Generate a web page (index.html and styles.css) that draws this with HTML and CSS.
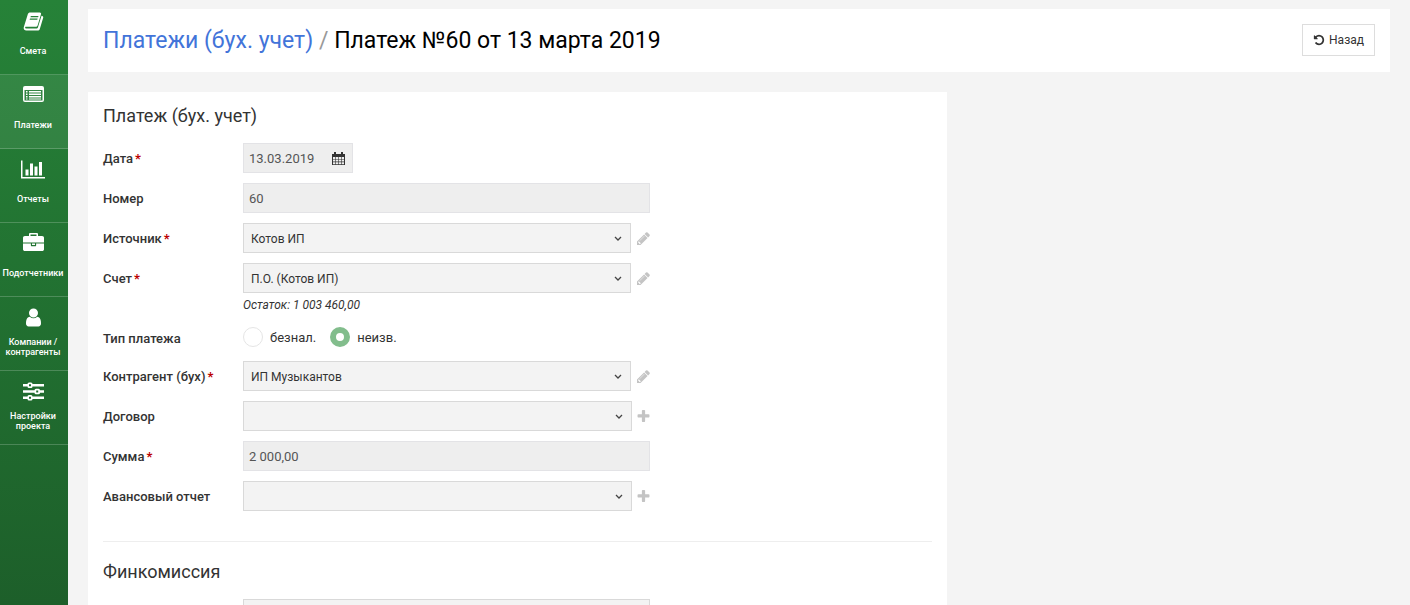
FILE: index.html
```html
<!DOCTYPE html>
<html lang="ru">
  <head>
    <meta charset="UTF-8" />
    <meta name="viewport" content="width=device-width, initial-scale=1" />
    <title>Платеж №60 от 13 марта 2019</title>
    <link rel="stylesheet" href="styles.css">
  </head>
  <body>
    <!-- shared icons -->
    <svg class="sprite" aria-hidden="true">
      <symbol id="pencil" viewBox="128 128 1536 1536">
        <path d="M491 1536l91-91-235-235-91 91v107h128v128h107zm523-928q0-22-22-22-10 0-17 7l-542 542q-7 7-7 17 0 22 22 22 10 0 17-7l542-542q7-7 7-17zm-54-192l416 416-832 832h-416v-416zm683 96q0 53-37 90l-166 166-416-416 166-165q36-38 90-38 53 0 91 38l235 234q37 39 37 91z" />
      </symbol>
      <symbol id="plus" viewBox="128 128 1536 1536">
        <path d="M1600 736v192q0 40-28 68t-68 28h-416v416q0 40-28 68t-68 28h-192q-40 0-68-28t-28-68v-416h-416q-40 0-68-28t-28-68v-192q0-40 28-68t68-28h416v-416q0-40 28-68t68-28h192q40 0 68 28t28 68v416h416q40 0 68 28t28 68z" />
      </symbol>
    </svg>

    <div class="app">
      <nav class="sidebar">
        <a href="#">
          <svg viewBox="0 0 21 21">
            <path fill-rule="evenodd" d="M7.2 1.5h9.6c1 0 1.5.8 1.2 1.7l-3.4 11.2c-.3.9-1.1 1.4-2 1.4H2.8c-.6 0-.9.7-.5 1.2.2.4.6.5 1.1.5h10.3c.5 0 .9-.3 1.1-.8l3.7-12c1.3.3 2 1 1.7 2.1l-3.4 11.1c-.3.9-1.2 1.6-2.2 1.6H3.300C1.700 19.500.4 18 .7 16.400L4.800 3.200c.4-1 1.200-1.700 2.400-1.700zM7.800 5l-.3 1.200h7.600l.4-1.200zM7 7.600l-.4 1.200h7.700l.3-1.200z" />
          </svg>
          <span>Смета</span>
        </a>
        <a href="#" class="active">
          <svg viewBox="0 0 21 21">
            <path fill-rule="evenodd" d="M2 1h17a2 2 0 0 1 2 2v12a2 2 0 0 1-2 2H2a2 2 0 0 1-2-2V3a2 2 0 0 1 2-2zM1.500 5v10.500h18V5zM3 6h1.500v1.500H3zm3 0h12v1.500H6zM3 8.500h1.500V10H3zm3 0h12V10H6zM3 11h1.500v1.500H3zm3 0h12v1.500H6zM3 13.500h1.500v1H3zm3 0h12v1H6z" />
          </svg>
          <span>Платежи</span>
        </a>
        <a href="#">
          <svg class="wide" viewBox="0 0 2048 1792">
            <path d="M640 896v512h-256v-512h256zm384-512v1024h-256v-1024h256zm1024 1152v128h-2048v-1536h128v1408h1920zm-640-896v768h-256v-768h256zm384-384v1152h-256v-1152h256z" />
          </svg>
          <span>Отчеты</span>
        </a>
        <a href="#">
          <svg viewBox="0 0 1792 1792">
            <path d="M640 256h512v-128h-512v128zm1152 640v480q0 66-47 113t-113 47h-1472q-66 0-113-47t-47-113v-480h672v160q0 26 19 45t45 19h320q26 0 45-19t19-45v-160h672zm-768 0v128h-256v-128h256zm768-480v384h-1792v-384q0-66 47-113t113-47h352v-160q0-40 28-68t68-28h576q40 0 68 28t28 68v160h352q66 0 113 47t47 113z" />
          </svg>
          <span>Подотчетники</span>
        </a>
        <a href="#">
          <svg viewBox="0 0 1792 1792">
            <path d="M1536 1399q0 109-62.500 187t-150.500 78h-854q-88 0-150.500-78t-62.500-187q0-85 8.500-160.500t31.500-152 58.500-131 94-89 134.500-34.500q131 128 313 128t313-128q76 0 134.500 34.500t94 89 58.500 131 31.500 152 8.500 160.500zm-256-887q0 159-112.500 271.500t-271.500 112.500-271.500-112.500-112.500-271.500 112.500-271.500 271.500-112.500 271.500 112.500 112.500 271.500z" />
          </svg>
          <span>Компании / контрагенты</span>
        </a>
        <a href="#">
          <svg viewBox="0 0 21 21">
            <path fill-rule="evenodd" d="M0 3h4.500v2.500H0zM9.500 3H21v2.500H9.500zM6 1.500h2a1.500 1.500 0 0 1 1.500 1.500v2.500A1.500 1.500 0 0 1 8 7H6a1.500 1.500 0 0 1-1.500-1.500V3A1.500 1.500 0 0 1 6 1.500zM6 3.200v2.100h2V3.200zM0 9.200h11.500v2.500H0zM17 9.200h4v2.500h-4zM13 7.700h2.500A1.500 1.500 0 0 1 17 9.200v2.500a1.500 1.500 0 0 1-1.500 1.500H13a1.500 1.500 0 0 1-1.500-1.500V9.200A1.500 1.500 0 0 1 13 7.700zM13.200 9.400v2.100h2V9.400zM0 15.500h4.500V18H0zM9.500 15.500H21V18H9.500zM6 14h2a1.500 1.500 0 0 1 1.500 1.500V18A1.500 1.500 0 0 1 8 19.500H6A1.500 1.500 0 0 1 4.500 18v-2.500A1.500 1.500 0 0 1 6 14zM6 15.700v2.100h2v-2.100z" />
          </svg>
          <span>Настройки проекта</span>
        </a>
      </nav>

      <main>
        <header>
          <h1><a href="#">Платежи (бух. учет)</a> <i>/</i> Платеж №60 от 13 марта 2019</h1>
          <button class="back" type="button">
            <svg viewBox="0 0 1792 1792">
              <path d="M1664 896q0 156-61 298t-164 245-245 164-298 61q-172 0-327-72.500t-264-204.500q-7-10-6.500-22.500t8.500-20.500l137-138q10-9 25-9 16 2 23 12 73 95 179 147t225 52q104 0 198.500-40.500t163.500-109.500 109.500-163.500 40.500-198.500-40.500-198.500-109.500-163.500-163.500-109.500-198.500-40.500q-98 0-188 35.500t-160 101.500l137 138q31 30 14 69-17 40-59 40h-448q-26 0-45-19t-19-45v-448q0-42 40-59 39-17 69 14l130 129q107-101 244.500-156.500t284.500-55.500q156 0 298 61t245 164 164 245 61 298z" />
            </svg>
            Назад
          </button>
        </header>

        <form class="card">
          <h2>Платеж (бух. учет)</h2>
          <div class="row">
            <label for="date">Дата<b>*</b></label>
            <div class="field date">
              <input type="text" id="date" value="13.03.2019" readonly />
              <svg viewBox="0 0 13 13">
                <path fill-rule="evenodd" d="M0 2h2V0h2v2h5V0h2v2h2v11H0zM1 5v2h2V5zm2.600 0v2h2.400V5zm3 0v2H9V5zm3 0v2H12V5zM1 7.600v2h2v-2zm2.600 0v2H6v-2zm3 0v2H9v-2zm3 0v2H12v-2zM1 10.200v2h2v-2zm2.600 0v2H6v-2zm3 0v2H9v-2zm3 0v2H12v-2z" />
              </svg>
            </div>
          </div>
          <div class="row">
            <label for="number">Номер</label>
            <div class="field"><input type="text" id="number" value="60" readonly /></div>
          </div>
          <div class="row">
            <label for="source">Источник<b>*</b></label>
            <div class="field">
              <select id="source"><option>Котов ИП</option></select>
              <button class="tool" type="button" aria-label="Изменить"><svg><use href="#pencil" /></svg></button>
            </div>
          </div>
          <div class="row">
            <label for="account">Счет<b>*</b></label>
            <div class="field">
              <select id="account"><option>П.О. (Котов ИП)</option></select>
              <button class="tool" type="button" aria-label="Изменить"><svg><use href="#pencil" /></svg></button>
              <p class="hint">Остаток: 1 003 460,00</p>
            </div>
          </div>
          <div class="row" role="radiogroup" aria-labelledby="type">
            <span class="label" id="type">Тип платежа</span>
            <div class="field radios">
              <label><input type="radio" name="type" />безнал.</label>
              <label><input type="radio" name="type" checked />неизв.</label>
            </div>
          </div>
          <div class="row">
            <label for="partner">Контрагент (бух)<b>*</b></label>
            <div class="field">
              <select id="partner"><option>ИП Музыкантов</option></select>
              <button class="tool" type="button" aria-label="Изменить"><svg><use href="#pencil" /></svg></button>
            </div>
          </div>
          <div class="row">
            <label for="contract">Договор</label>
            <div class="field">
              <select id="contract"><option></option></select>
              <button class="tool add" type="button" aria-label="Добавить"><svg><use href="#plus" /></svg></button>
            </div>
          </div>
          <div class="row">
            <label for="sum">Сумма<b>*</b></label>
            <div class="field"><input type="text" id="sum" value="2 000,00" readonly /></div>
          </div>
          <div class="row">
            <label for="report">Авансовый отчет</label>
            <div class="field">
              <select id="report"><option></option></select>
              <button class="tool add" type="button" aria-label="Добавить"><svg><use href="#plus" /></svg></button>
            </div>
          </div>

          <hr />
          <h2>Финкомиссия</h2>
          <div class="row">
            <span class="label"></span>
            <div class="field"><select aria-label="Финкомиссия"><option></option></select></div>
          </div>
        </form>
      </main>
    </div>
  </body>
</html>
```
FILE: styles.css
```css
* {
  box-sizing: border-box;
}
body {
  margin: 0;
  font-family: Roboto, "Liberation Sans", sans-serif;
  font-size: 13px;
  color: #333;
  background-color: #f4f4f4;
}
svg {
  fill: currentColor;
}
.sprite {
  display: none;
}
.app {
  display: flex;
  height: 100vh;
}

/* sidebar */
.sidebar {
  flex: 0 0 68px;
  padding-top: 1px;
  background: linear-gradient(#268238, #1d5f2a);
}
.sidebar a {
  display: flex;
  flex-direction: column;
  align-items: center;
  gap: 9px;
  height: 74px;
  padding: 10px 2px 0 0;
  border-bottom: 1px solid rgba(255, 255, 255, 0.2);
  color: white;
  font-size: 9px;
  font-weight: 500;
  line-height: 10px;
  text-align: center;
  text-decoration: none;
}
.sidebar a.active {
  background-color: rgba(255, 255, 255, 0.07);
}
.sidebar svg {
  flex: none;
  width: 21px;
  height: 21px;
}
.sidebar svg.wide {
  width: 24px;
}
.sidebar span {
  display: flex;
  align-items: center;
  justify-content: center;
  width: 64px;
  height: 20px;
}

/* content */
main {
  flex: 1;
  min-width: 0;
  padding: 9px 20px 20px;
  overflow-y: auto;
  scrollbar-width: none;
}
header {
  display: flex;
  justify-content: space-between;
  align-items: flex-start;
  padding: 15px;
  margin-bottom: 20px;
  background-color: white;
}
h1 {
  margin: 0;
  font-size: 23px;
  font-weight: 400;
  line-height: 33px;
  color: black;
}
h1 a {
  color: #4274d9;
  text-decoration: none;
}
h1 i {
  font-style: normal;
  color: #999;
}
.back {
  display: flex;
  align-items: center;
  gap: 4px;
  height: 32px;
  padding: 0 10px;
  border: 1px solid #ddd;
  background-color: white;
  color: #333;
  font-family: inherit;
  font-size: 12px;
}
.back svg {
  width: 12px;
  height: 12px;
}
.card {
  width: 66%;
  padding: 12px 15px 30px;
  background-color: white;
}
h2 {
  margin: 0 0 15px;
  font-size: 18px;
  font-weight: 400;
  line-height: 24px;
}
hr {
  margin: 30px 0 18px;
  border: 0;
  border-top: 1px solid #eee;
}

/* form rows */
.row {
  display: flex;
  margin-bottom: 10px;
}
.row > label,
.row > .label {
  flex: 0 0 140px;
  height: 28px;
  font-weight: 500;
  line-height: 32px;
}
.row b {
  margin-left: 2px;
  color: #b00;
}
.field {
  display: flex;
  flex-wrap: wrap;
  align-items: center;
  width: 407px;
}
.field input[type="text"],
.field select {
  flex: 1;
  min-width: 0;
  height: 30px;
  padding: 0 5px;
  border: 1px solid #e3e3e6;
  border-radius: 0;
  background-color: #eee;
  color: #555;
  font-family: inherit;
  font-size: 13px;
}
.field select {
  appearance: none;
  padding: 1px 7px 0;
  border-color: #d9d9d9;
  color: #333;
  font-size: 12px;
  background: #f3f3f3 url("data:image/svg+xml,%3Csvg xmlns='http://www.w3.org/2000/svg' width='8' height='6'%3E%3Cpath d='M1 2l3 3 3-3' fill='none' stroke='%23444' stroke-width='1.3'/%3E%3C/svg%3E") no-repeat right 8px center;
}
.field.date {
  position: relative;
  width: 110px;
}
.date svg {
  position: absolute;
  right: 8px;
  width: 13px;
  height: 13px;
}
.tool {
  display: flex;
  justify-content: flex-end;
  width: 19px;
  padding: 0;
  border: 0;
  background: none;
  color: #c4c4c4;
}
.tool.add {
  width: 18px;
}
.tool svg {
  width: 13px;
  height: 13px;
}
.hint {
  width: 100%;
  height: 20px;
  margin: 0;
  font-size: 12px;
  font-style: italic;
  line-height: 24px;
}
.radios {
  gap: 14px;
  height: 28px;
}
.radios label {
  display: flex;
  align-items: center;
  gap: 7px;
}
.radios input {
  appearance: none;
  width: 20px;
  height: 20px;
  margin: 0;
  border: 1px solid #e5e5e5;
  border-radius: 50%;
  background-color: white;
}
.radios input:checked {
  border: 6px solid #82bd8c;
}
```
